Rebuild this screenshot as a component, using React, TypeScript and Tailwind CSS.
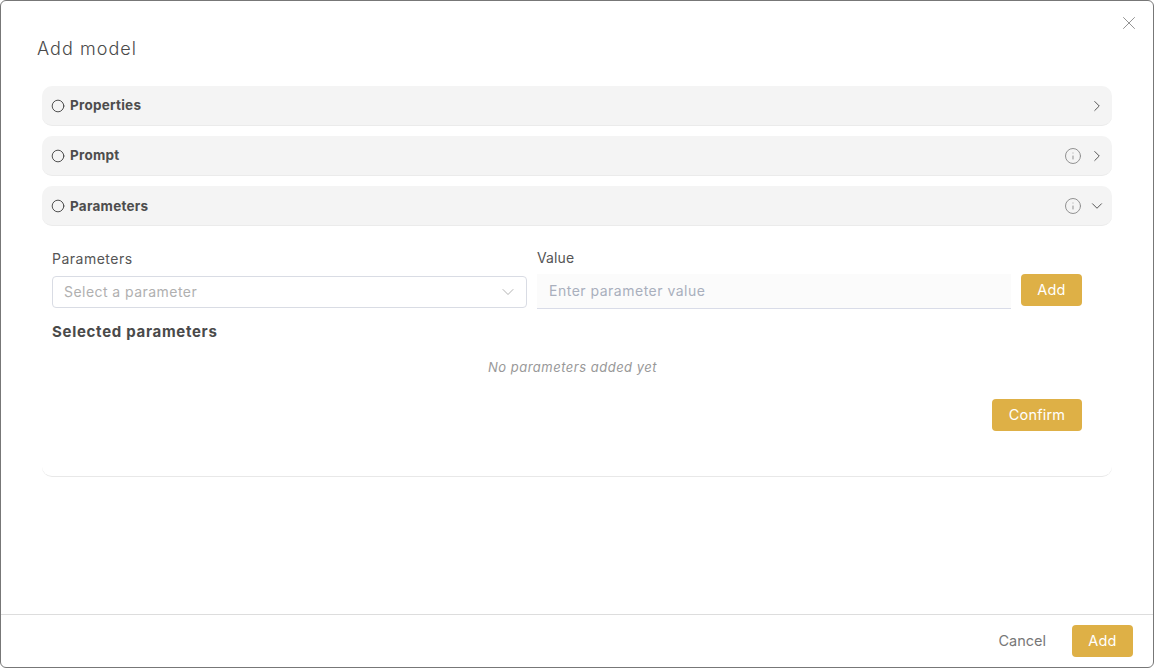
import { ChevronDown, ChevronRight, Info, X, Circle } from "lucide-react";

const font = "font-['Inter','Liberation_Sans',sans-serif]";

function Row({ title, info, open }: { title: string; info?: boolean; open?: boolean }) {
  return (
    <div className="flex h-10 items-center rounded-[10px] border-b border-[#ebebeb] bg-[#f4f4f4] pl-[9px] pr-[6px]">
      <Circle size={14} strokeWidth={1.6} className="text-[#444]" />
      <span className={`${open ? "mt-[2px]" : ""} ml-[5px] text-[13.5px] font-bold tracking-[0.25px] text-[#4d4d4d]`}>{title}</span>
      <div className="ml-auto flex items-center gap-[6px]">
        {info && <Info size={18} strokeWidth={1.3} className={`${open ? "mt-[1px]" : ""} text-[#8f8f8f]`} />}
        {open ? (
          <ChevronDown size={18} strokeWidth={1.2} className="text-[#444]" />
        ) : (
          <ChevronRight size={18} strokeWidth={1.2} className="text-[#444]" />
        )}
      </div>
    </div>
  );
}

function GoldButton({ label, w }: { label: string; w: string }) {
  return (
    <button className={`${w} h-8 rounded-[4px] bg-[#deb046] text-[14.5px] tracking-[0.2px] text-white`}>{label}</button>
  );
}

export default function App() {
  return (
    <div className={`${font} relative flex h-[668px] w-[1154px] flex-col overflow-hidden rounded-[6px] border border-[#777] bg-white`}>
      <button className="absolute right-[13px] top-[11px] text-[#8a8a8a]">
        <X size={22} strokeWidth={1} />
      </button>
      <h1 className="ml-[36px] mt-[36px] text-[18px] font-light leading-[24px] tracking-[1.05px] text-[#4a4a4a]">Add model</h1>

      <div className="ml-[41px] mt-[25px] flex w-[1070px] flex-col gap-[10px]">
        <Row title="Properties" />
        <Row title="Prompt" info />
        <div>
          <Row title="Parameters" info open />
          <div className="h-[251px] rounded-b-[10px] border-b border-[#e8e8e8] pl-[10px] pr-[30px] pt-[22px]">
            <div className="flex items-start">
              <div className="w-[475px]">
                <div className="mt-[1px] text-[14px] leading-[20px] tracking-[0.5px] text-[#555]">Parameters</div>
                <div className="mt-[7px] flex h-8 items-center justify-between rounded-[4px] border border-[#d9dce4] pl-[11px] pr-[8px]">
                  <span className="pb-[2px] text-[14px] tracking-[0.45px] text-[#b0b0b0]">Select a parameter</span>
                  <ChevronDown size={20} strokeWidth={0.9} className="text-[#999]" />
                </div>
              </div>
              <div className="ml-[10px] w-[474px]">
                <div className="text-[14px] leading-[20px] tracking-[0.1px] text-[#555]">Value</div>
                <div className="mt-[6px] flex h-[35px] items-center border-b border-[#d9dce8] bg-[#fbfbfb] pl-[12px]">
                  <span className="pb-[2px] text-[14px] tracking-[0.5px] text-[#a9afbd]">Enter parameter value</span>
                </div>
              </div>
              <div className="ml-[10px]">
                <div className="-mt-[2px] h-[28px]" />
                <GoldButton label="Add" w="w-[61px]" />
              </div>
            </div>
            <div className="mt-[14px] text-[15px] font-bold leading-[18px] tracking-[0.7px] text-[#4a4a4a]">Selected parameters</div>
            <div className="ml-[11px] mt-[17px] text-center text-[13px] italic leading-[18px] tracking-[0.5px] text-[#999]">No parameters added yet</div>
            <div className="mt-[23px] flex justify-end">
              <GoldButton label="Confirm" w="w-[90px]" />
            </div>
          </div>
        </div>
      </div>

      <div className="mt-auto flex h-[53px] items-center justify-end border-t border-[#ddd] pr-[20px]">
        <span className="mr-[26px] text-[14.5px] text-[#777]">Cancel</span>
        <GoldButton label="Add" w="w-[61px]" />
      </div>
    </div>
  );
}
